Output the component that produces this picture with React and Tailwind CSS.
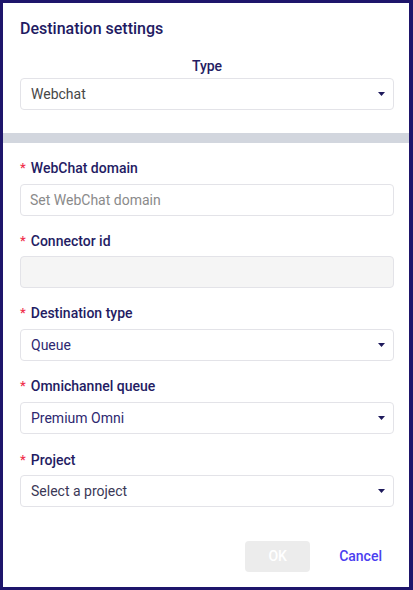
import React from "react";

const Caret = () => (
  <svg width="7" height="4" viewBox="0 0 7 4" className="shrink-0">
    <path d="M0 0 L7 0 L3.5 4 Z" fill="#1e1a5c" />
  </svg>
);

const Label = ({ children, required = true }) => (
  <div className="flex items-center h-[20px] text-[14px] font-medium text-[#241c63] leading-[20px]">
    {required && <span className="text-[#f0314e] mr-[5px] text-[13px]">*</span>}
    <span>{children}</span>
  </div>
);

const Select = ({ value, color = "text-[#2d2870]" }) => (
  <div className="h-[32px] border border-[#e3e3e8] rounded-[4px] bg-white flex items-center justify-between pl-[10px] pr-[8px]">
    <span className={`text-[14px] ${color}`}>{value}</span>
    <Caret />
  </div>
);

export default function App() {
  return (
    <div
      className="w-[413px] h-[590px] bg-white border-[3px] border-r-[4px] border-[#1e156b] flex flex-col"
      style={{ fontFamily: "Roboto, 'Liberation Sans', sans-serif" }}
    >
      <div className="pl-[17px] pr-[15px] pt-[16px]">
        <div className="text-[16px] font-medium text-[#221a62] leading-[20px]">Destination settings</div>
        <div className="mt-[17px] text-center text-[14px] font-medium text-[#241c63] leading-[20px]">Type</div>
        <div className="mt-[2px]">
          <Select value="Webchat" color="text-[#474747]" />
        </div>
      </div>
      <div className="mt-[23px] h-[10px] bg-[#d2d6de]" />
      <div className="pl-[17px] pr-[15px] pt-[15px] flex flex-col">
        <Label>WebChat domain</Label>
        <div className="mt-[6px] h-[32px] border border-[#e3e3e8] rounded-[4px] bg-white flex items-center pl-[9px]">
          <span className="text-[14px] text-[#8a8a8a]">Set WebChat domain</span>
        </div>
        <div className="mt-[15px]">
          <Label>Connector id</Label>
        </div>
        <div className="mt-[5px] h-[32px] border border-[#e3e3e8] rounded-[4px] bg-[#f5f5f5]" />
        <div className="mt-[15px]">
          <Label>Destination type</Label>
        </div>
        <div className="mt-[6px]">
          <Select value="Queue" />
        </div>
        <div className="mt-[15px]">
          <Label>Omnichannel queue</Label>
        </div>
        <div className="mt-[6px]">
          <Select value="Premium Omni" />
        </div>
        <div className="mt-[16px]">
          <Label>Project</Label>
        </div>
        <div className="mt-[5px]">
          <Select value="Select a project" color="text-[#3b3856]" />
        </div>
        <div className="mt-[34px] flex justify-end items-center pr-[12px]">
          <div className="w-[65px] h-[31px] rounded-[4px] bg-[#ececec] flex items-center justify-center text-[14px] font-medium text-white">
            OK
          </div>
          <div className="ml-[29px] text-[14px] font-medium text-[#4b3ef0]">Cancel</div>
        </div>
      </div>
    </div>
  );
}
